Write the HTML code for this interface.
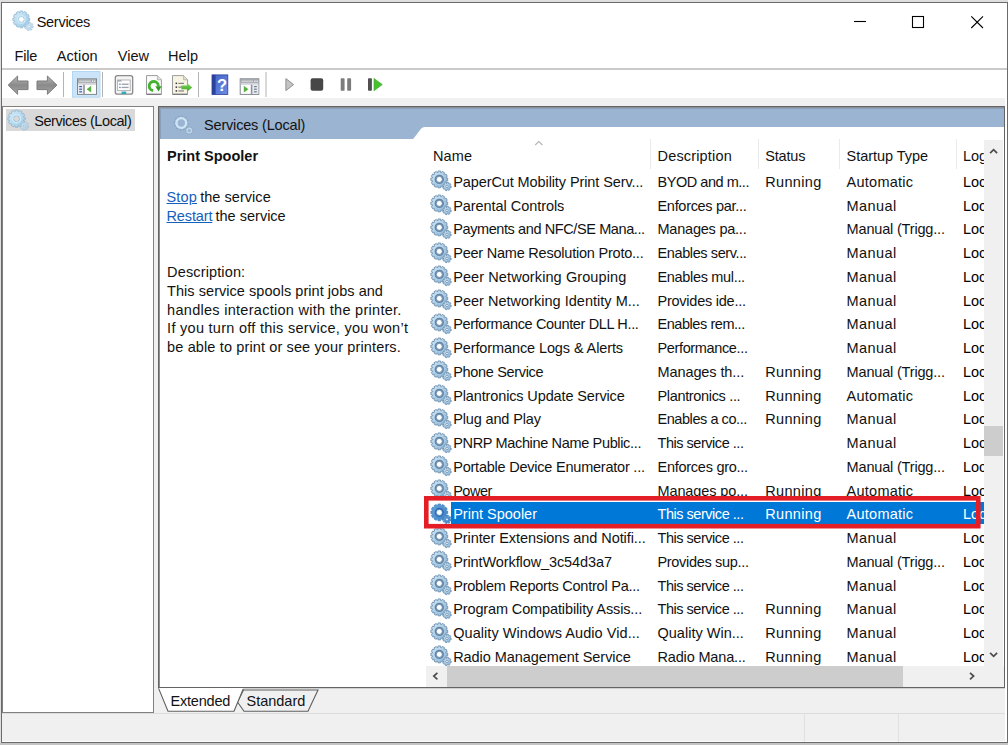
<!DOCTYPE html>
<html lang="en"><head><meta charset="utf-8"><title>Services</title>
<style>html,body{margin:0;padding:0}
body{width:1008px;height:745px;overflow:hidden;background:#dedede;position:relative;font-family:"Liberation Sans",sans-serif;font-size:14.5px;line-height:20px;color:#121212}
.a{position:absolute}
.t{position:absolute;white-space:pre;height:20px}
svg{position:absolute;overflow:visible}
</style></head><body>
<div class="a" style="left:0px;top:743px;width:1008px;height:2px;background:#c4c4c4;"></div>
<div class="a" style="left:1px;top:2px;width:1007px;height:741px;background:#6b6b6b;"></div>
<div class="a" style="left:2px;top:3px;width:1005px;height:739px;background:#fff;"></div>
<div class="a" style="left:2px;top:98px;width:1005px;height:644px;background:#f0f0f0;"></div>
<div class="a" style="left:2px;top:68px;width:1005px;height:2px;background:#cacaca;"></div>
<div class="a" style="left:2px;top:106px;width:152px;height:607px;background:#808080;"></div>
<div class="a" style="left:3px;top:107px;width:150px;height:605px;background:#fff;"></div>
<div class="a" style="left:6px;top:109px;width:128.5px;height:21.6px;background:#d9d9d9;"></div>
<div class="a" style="left:158px;top:106px;width:847px;height:582px;background:#646464;"></div>
<div class="a" style="left:1004px;top:106px;width:3px;height:1px;background:#7a7a7a;"></div>
<div class="a" style="left:159px;top:107px;width:845px;height:580px;background:#8b9097;"></div>
<div class="a" style="left:160px;top:108px;width:844px;height:579px;background:#fff;"></div>
<div class="a" style="left:1005px;top:98px;width:2px;height:644px;background:#fff;"></div>
<div class="a" style="left:2px;top:741px;width:1005px;height:1px;background:#fbfbfb;"></div>
<div class="a" style="left:158px;top:688px;width:847px;height:1px;background:#d0d0d0;"></div>
<div class="a" style="left:160px;top:108px;width:844px;height:31.3px;background:#9ab4d1;"></div>
<div class="a" style="left:160px;top:108px;width:844px;height:1px;background:#8a9fb9;"></div>
<div class="a" style="left:160px;top:108px;width:1px;height:31.3px;background:#8a9fb9;"></div>
<svg style="left:410px;top:124px" width="594" height="18" viewBox="410 124 594 18"><path d="M412 139.4 L413.6 138.6 L421.2 128.6 Q422.5 126.9 424.8 126.9 L1004 126.9 L1004 142 L412 142 Z" fill="#fff"/></svg>
<div class="a" style="left:650px;top:139px;width:1px;height:29.5px;background:#ebebeb;"></div>
<div class="a" style="left:757.5px;top:139px;width:1px;height:29.5px;background:#ebebeb;"></div>
<div class="a" style="left:838.5px;top:139px;width:1px;height:29.5px;background:#ebebeb;"></div>
<div class="a" style="left:955.5px;top:139px;width:1px;height:29.5px;background:#ebebeb;"></div>
<svg style="left:534px;top:140px" width="10" height="6" viewBox="0 0 10 6"><path d="M1.2 5 L4.8 1.6 L8.4 5" fill="none" stroke="#b4b4b4" stroke-width="1.1"/></svg>
<div class="a" style="left:451px;top:502.3px;width:533px;height:22px;background:#0078d7;"></div>
<div class="a" style="left:984px;top:140px;width:19.4px;height:526.4px;background:#f0f0f0;"></div>
<div class="a" style="left:984px;top:425.8px;width:19.4px;height:29.8px;background:#cdcdcd;"></div>
<svg style="left:984px;top:140px" width="20" height="20" viewBox="984 140 20 20"><path d="M990.1 153.2 L993.6 149.6 L997.1 153.2" fill="none" stroke="#4c4c4c" stroke-width="1.7"/></svg>
<svg style="left:984px;top:645px" width="20" height="20" viewBox="984 645 20 20"><path d="M990.1 652.8 L993.6 656.4 L997.1 652.8" fill="none" stroke="#4c4c4c" stroke-width="1.7"/></svg>
<div class="a" style="left:426px;top:666.4px;width:578px;height:20.6px;background:#f0f0f0;"></div>
<div class="a" style="left:447px;top:666.4px;width:456.3px;height:20.6px;background:#cdcdcd;"></div>
<svg style="left:427px;top:666px" width="20" height="21" viewBox="427 666 20 21"><path d="M437.4 672.9 L433.8 676.1 L437.4 679.3" fill="none" stroke="#4c4c4c" stroke-width="1.7"/></svg>
<svg style="left:962px;top:666px" width="20" height="21" viewBox="962 666 20 21"><path d="M970 672.9 L973.6 676.1 L970 679.3" fill="none" stroke="#4c4c4c" stroke-width="1.7"/></svg>
<svg style="left:150px;top:686px" width="180" height="28" viewBox="0 0 180 28"><path d="M87.5 16 L93.5 4 L168 4 L158 25.3 L94 25.3 Z" fill="#f0f0f0" stroke="#5f5f5f" stroke-width="1.1"/><path d="M8.6 2 L18 25.3 L84 25.3 L93.2 3 L93.2 2 Z" fill="#fff"/><path d="M8.6 2.4 L18 25.3 L84 25.3 L93.2 3" fill="none" stroke="#5f5f5f" stroke-width="1.1"/></svg>
<div class="a" style="left:2px;top:713px;width:1003px;height:1px;background:#dcdcdc;"></div>
<div class="a" style="left:803.5px;top:714px;width:1px;height:28px;background:#e1e1e1;"></div>
<div class="a" style="left:897.5px;top:714px;width:1px;height:28px;background:#e1e1e1;"></div>
<svg style="left:850px;top:10px" width="140" height="24" viewBox="0 0 140 24"><path d="M4 11.5 H16" stroke="#000" stroke-width="1.1"/><rect x="62.5" y="6.5" width="11" height="11" fill="none" stroke="#000" stroke-width="1.1"/><path d="M121.3 6.3 L133 18 M133 6.3 L121.3 18" stroke="#000" stroke-width="1.1"/></svg>
<svg width="0" height="0" style="left:0;top:0"><defs><linearGradient id="gg" x1="0" y1="0" x2="1" y2="1"><stop offset="0" stop-color="#d6eaf6"/><stop offset="0.55" stop-color="#aacde8"/><stop offset="1" stop-color="#86b0d3"/></linearGradient><linearGradient id="gp" x1="0" y1="0" x2="1" y2="1"><stop offset="0" stop-color="#d3ebf8"/><stop offset="0.6" stop-color="#b3d8ee"/><stop offset="1" stop-color="#9cc4e0"/></linearGradient><linearGradient id="gs" x1="0" y1="0" x2="1" y2="1"><stop offset="0" stop-color="#6aa3d8"/><stop offset="1" stop-color="#3b7fc4"/></linearGradient></defs></svg>
<svg style="left:11.5px;top:10.1px" width="22" height="22" viewBox="0 0 22 22"><path d="M16.16 8.02 L17.70 8.07 L17.70 10.73 L16.16 10.78 L15.93 11.63 L17.24 12.45 L15.91 14.75 L14.55 14.03 L13.93 14.65 L14.65 16.01 L12.35 17.34 L11.53 16.03 L10.68 16.26 L10.63 17.80 L7.97 17.80 L7.92 16.26 L7.07 16.03 L6.25 17.34 L3.95 16.01 L4.67 14.65 L4.05 14.03 L2.69 14.75 L1.36 12.45 L2.67 11.63 L2.44 10.78 L0.90 10.73 L0.90 8.07 L2.44 8.02 L2.67 7.17 L1.36 6.35 L2.69 4.05 L4.05 4.77 L4.67 4.15 L3.95 2.79 L6.25 1.46 L7.07 2.77 L7.92 2.54 L7.97 1.00 L10.63 1.00 L10.68 2.54 L11.53 2.77 L12.35 1.46 L14.65 2.79 L13.93 4.15 L14.55 4.77 L15.91 4.05 L17.24 6.35 L15.93 7.17 Z M6.30 9.40 a3.00 3.00 0 1 0 6.00 0 a3.00 3.00 0 1 0 -6.00 0 Z" fill="url(#gp)" fill-rule="evenodd" stroke="#93b6d0" stroke-width="0.8"/><circle cx="9.3" cy="9.4" r="3.9" fill="none" stroke="#c9e8f8" stroke-width="1.6"/><path d="M20.09 16.22 L21.30 16.42 L20.97 18.06 L19.78 17.77 L19.32 18.46 L20.03 19.45 L18.63 20.38 L17.99 19.34 L17.18 19.49 L16.98 20.70 L15.34 20.37 L15.63 19.18 L14.94 18.72 L13.95 19.43 L13.02 18.03 L14.06 17.39 L13.91 16.58 L12.70 16.38 L13.03 14.74 L14.22 15.03 L14.68 14.34 L13.97 13.35 L15.37 12.42 L16.01 13.46 L16.82 13.31 L17.02 12.10 L18.66 12.43 L18.37 13.62 L19.06 14.08 L20.05 13.37 L20.98 14.77 L19.94 15.41 Z M15.80 16.40 a1.20 1.20 0 1 0 2.40 0 a1.20 1.20 0 1 0 -2.40 0 Z" fill="url(#gp)" fill-rule="evenodd" stroke="#9dbdd6" stroke-width="0.7" opacity="0.8"/></svg>
<svg style="left:7.421px;top:108.718px" width="22.66" height="22.66" viewBox="0 0 22 22"><path d="M16.16 8.02 L17.70 8.07 L17.70 10.73 L16.16 10.78 L15.93 11.63 L17.24 12.45 L15.91 14.75 L14.55 14.03 L13.93 14.65 L14.65 16.01 L12.35 17.34 L11.53 16.03 L10.68 16.26 L10.63 17.80 L7.97 17.80 L7.92 16.26 L7.07 16.03 L6.25 17.34 L3.95 16.01 L4.67 14.65 L4.05 14.03 L2.69 14.75 L1.36 12.45 L2.67 11.63 L2.44 10.78 L0.90 10.73 L0.90 8.07 L2.44 8.02 L2.67 7.17 L1.36 6.35 L2.69 4.05 L4.05 4.77 L4.67 4.15 L3.95 2.79 L6.25 1.46 L7.07 2.77 L7.92 2.54 L7.97 1.00 L10.63 1.00 L10.68 2.54 L11.53 2.77 L12.35 1.46 L14.65 2.79 L13.93 4.15 L14.55 4.77 L15.91 4.05 L17.24 6.35 L15.93 7.17 Z M6.30 9.40 a3.00 3.00 0 1 0 6.00 0 a3.00 3.00 0 1 0 -6.00 0 Z" fill="url(#gp)" fill-rule="evenodd" stroke="#93b6d0" stroke-width="0.8"/><circle cx="9.3" cy="9.4" r="3.9" fill="none" stroke="#c9e8f8" stroke-width="1.6"/><path d="M20.09 16.22 L21.30 16.42 L20.97 18.06 L19.78 17.77 L19.32 18.46 L20.03 19.45 L18.63 20.38 L17.99 19.34 L17.18 19.49 L16.98 20.70 L15.34 20.37 L15.63 19.18 L14.94 18.72 L13.95 19.43 L13.02 18.03 L14.06 17.39 L13.91 16.58 L12.70 16.38 L13.03 14.74 L14.22 15.03 L14.68 14.34 L13.97 13.35 L15.37 12.42 L16.01 13.46 L16.82 13.31 L17.02 12.10 L18.66 12.43 L18.37 13.62 L19.06 14.08 L20.05 13.37 L20.98 14.77 L19.94 15.41 Z M15.80 16.40 a1.20 1.20 0 1 0 2.40 0 a1.20 1.20 0 1 0 -2.40 0 Z" fill="url(#gp)" fill-rule="evenodd" stroke="#9dbdd6" stroke-width="0.7" opacity="0.8"/></svg>
<svg style="left:430px;top:170.3px" width="22" height="22" viewBox="0 0 22 22"><path d="M16.16 8.02 L17.70 8.07 L17.70 10.73 L16.16 10.78 L15.93 11.63 L17.24 12.45 L15.91 14.75 L14.55 14.03 L13.93 14.65 L14.65 16.01 L12.35 17.34 L11.53 16.03 L10.68 16.26 L10.63 17.80 L7.97 17.80 L7.92 16.26 L7.07 16.03 L6.25 17.34 L3.95 16.01 L4.67 14.65 L4.05 14.03 L2.69 14.75 L1.36 12.45 L2.67 11.63 L2.44 10.78 L0.90 10.73 L0.90 8.07 L2.44 8.02 L2.67 7.17 L1.36 6.35 L2.69 4.05 L4.05 4.77 L4.67 4.15 L3.95 2.79 L6.25 1.46 L7.07 2.77 L7.92 2.54 L7.97 1.00 L10.63 1.00 L10.68 2.54 L11.53 2.77 L12.35 1.46 L14.65 2.79 L13.93 4.15 L14.55 4.77 L15.91 4.05 L17.24 6.35 L15.93 7.17 Z M6.30 9.40 a3.00 3.00 0 1 0 6.00 0 a3.00 3.00 0 1 0 -6.00 0 Z" fill="url(#gg)" fill-rule="evenodd" stroke="#7797b4" stroke-width="1"/><circle cx="9.3" cy="9.4" r="3.9" fill="none" stroke="#6283a3" stroke-width="1.5"/><path d="M20.09 16.22 L21.30 16.42 L20.97 18.06 L19.78 17.77 L19.32 18.46 L20.03 19.45 L18.63 20.38 L17.99 19.34 L17.18 19.49 L16.98 20.70 L15.34 20.37 L15.63 19.18 L14.94 18.72 L13.95 19.43 L13.02 18.03 L14.06 17.39 L13.91 16.58 L12.70 16.38 L13.03 14.74 L14.22 15.03 L14.68 14.34 L13.97 13.35 L15.37 12.42 L16.01 13.46 L16.82 13.31 L17.02 12.10 L18.66 12.43 L18.37 13.62 L19.06 14.08 L20.05 13.37 L20.98 14.77 L19.94 15.41 Z M15.80 16.40 a1.20 1.20 0 1 0 2.40 0 a1.20 1.20 0 1 0 -2.40 0 Z" fill="url(#gg)" fill-rule="evenodd" stroke="#7595b3" stroke-width="0.9"/></svg>
<svg style="left:430px;top:194.05px" width="22" height="22" viewBox="0 0 22 22"><path d="M16.16 8.02 L17.70 8.07 L17.70 10.73 L16.16 10.78 L15.93 11.63 L17.24 12.45 L15.91 14.75 L14.55 14.03 L13.93 14.65 L14.65 16.01 L12.35 17.34 L11.53 16.03 L10.68 16.26 L10.63 17.80 L7.97 17.80 L7.92 16.26 L7.07 16.03 L6.25 17.34 L3.95 16.01 L4.67 14.65 L4.05 14.03 L2.69 14.75 L1.36 12.45 L2.67 11.63 L2.44 10.78 L0.90 10.73 L0.90 8.07 L2.44 8.02 L2.67 7.17 L1.36 6.35 L2.69 4.05 L4.05 4.77 L4.67 4.15 L3.95 2.79 L6.25 1.46 L7.07 2.77 L7.92 2.54 L7.97 1.00 L10.63 1.00 L10.68 2.54 L11.53 2.77 L12.35 1.46 L14.65 2.79 L13.93 4.15 L14.55 4.77 L15.91 4.05 L17.24 6.35 L15.93 7.17 Z M6.30 9.40 a3.00 3.00 0 1 0 6.00 0 a3.00 3.00 0 1 0 -6.00 0 Z" fill="url(#gg)" fill-rule="evenodd" stroke="#7797b4" stroke-width="1"/><circle cx="9.3" cy="9.4" r="3.9" fill="none" stroke="#6283a3" stroke-width="1.5"/><path d="M20.09 16.22 L21.30 16.42 L20.97 18.06 L19.78 17.77 L19.32 18.46 L20.03 19.45 L18.63 20.38 L17.99 19.34 L17.18 19.49 L16.98 20.70 L15.34 20.37 L15.63 19.18 L14.94 18.72 L13.95 19.43 L13.02 18.03 L14.06 17.39 L13.91 16.58 L12.70 16.38 L13.03 14.74 L14.22 15.03 L14.68 14.34 L13.97 13.35 L15.37 12.42 L16.01 13.46 L16.82 13.31 L17.02 12.10 L18.66 12.43 L18.37 13.62 L19.06 14.08 L20.05 13.37 L20.98 14.77 L19.94 15.41 Z M15.80 16.40 a1.20 1.20 0 1 0 2.40 0 a1.20 1.20 0 1 0 -2.40 0 Z" fill="url(#gg)" fill-rule="evenodd" stroke="#7595b3" stroke-width="0.9"/></svg>
<svg style="left:430px;top:217.8px" width="22" height="22" viewBox="0 0 22 22"><path d="M16.16 8.02 L17.70 8.07 L17.70 10.73 L16.16 10.78 L15.93 11.63 L17.24 12.45 L15.91 14.75 L14.55 14.03 L13.93 14.65 L14.65 16.01 L12.35 17.34 L11.53 16.03 L10.68 16.26 L10.63 17.80 L7.97 17.80 L7.92 16.26 L7.07 16.03 L6.25 17.34 L3.95 16.01 L4.67 14.65 L4.05 14.03 L2.69 14.75 L1.36 12.45 L2.67 11.63 L2.44 10.78 L0.90 10.73 L0.90 8.07 L2.44 8.02 L2.67 7.17 L1.36 6.35 L2.69 4.05 L4.05 4.77 L4.67 4.15 L3.95 2.79 L6.25 1.46 L7.07 2.77 L7.92 2.54 L7.97 1.00 L10.63 1.00 L10.68 2.54 L11.53 2.77 L12.35 1.46 L14.65 2.79 L13.93 4.15 L14.55 4.77 L15.91 4.05 L17.24 6.35 L15.93 7.17 Z M6.30 9.40 a3.00 3.00 0 1 0 6.00 0 a3.00 3.00 0 1 0 -6.00 0 Z" fill="url(#gg)" fill-rule="evenodd" stroke="#7797b4" stroke-width="1"/><circle cx="9.3" cy="9.4" r="3.9" fill="none" stroke="#6283a3" stroke-width="1.5"/><path d="M20.09 16.22 L21.30 16.42 L20.97 18.06 L19.78 17.77 L19.32 18.46 L20.03 19.45 L18.63 20.38 L17.99 19.34 L17.18 19.49 L16.98 20.70 L15.34 20.37 L15.63 19.18 L14.94 18.72 L13.95 19.43 L13.02 18.03 L14.06 17.39 L13.91 16.58 L12.70 16.38 L13.03 14.74 L14.22 15.03 L14.68 14.34 L13.97 13.35 L15.37 12.42 L16.01 13.46 L16.82 13.31 L17.02 12.10 L18.66 12.43 L18.37 13.62 L19.06 14.08 L20.05 13.37 L20.98 14.77 L19.94 15.41 Z M15.80 16.40 a1.20 1.20 0 1 0 2.40 0 a1.20 1.20 0 1 0 -2.40 0 Z" fill="url(#gg)" fill-rule="evenodd" stroke="#7595b3" stroke-width="0.9"/></svg>
<svg style="left:430px;top:241.55px" width="22" height="22" viewBox="0 0 22 22"><path d="M16.16 8.02 L17.70 8.07 L17.70 10.73 L16.16 10.78 L15.93 11.63 L17.24 12.45 L15.91 14.75 L14.55 14.03 L13.93 14.65 L14.65 16.01 L12.35 17.34 L11.53 16.03 L10.68 16.26 L10.63 17.80 L7.97 17.80 L7.92 16.26 L7.07 16.03 L6.25 17.34 L3.95 16.01 L4.67 14.65 L4.05 14.03 L2.69 14.75 L1.36 12.45 L2.67 11.63 L2.44 10.78 L0.90 10.73 L0.90 8.07 L2.44 8.02 L2.67 7.17 L1.36 6.35 L2.69 4.05 L4.05 4.77 L4.67 4.15 L3.95 2.79 L6.25 1.46 L7.07 2.77 L7.92 2.54 L7.97 1.00 L10.63 1.00 L10.68 2.54 L11.53 2.77 L12.35 1.46 L14.65 2.79 L13.93 4.15 L14.55 4.77 L15.91 4.05 L17.24 6.35 L15.93 7.17 Z M6.30 9.40 a3.00 3.00 0 1 0 6.00 0 a3.00 3.00 0 1 0 -6.00 0 Z" fill="url(#gg)" fill-rule="evenodd" stroke="#7797b4" stroke-width="1"/><circle cx="9.3" cy="9.4" r="3.9" fill="none" stroke="#6283a3" stroke-width="1.5"/><path d="M20.09 16.22 L21.30 16.42 L20.97 18.06 L19.78 17.77 L19.32 18.46 L20.03 19.45 L18.63 20.38 L17.99 19.34 L17.18 19.49 L16.98 20.70 L15.34 20.37 L15.63 19.18 L14.94 18.72 L13.95 19.43 L13.02 18.03 L14.06 17.39 L13.91 16.58 L12.70 16.38 L13.03 14.74 L14.22 15.03 L14.68 14.34 L13.97 13.35 L15.37 12.42 L16.01 13.46 L16.82 13.31 L17.02 12.10 L18.66 12.43 L18.37 13.62 L19.06 14.08 L20.05 13.37 L20.98 14.77 L19.94 15.41 Z M15.80 16.40 a1.20 1.20 0 1 0 2.40 0 a1.20 1.20 0 1 0 -2.40 0 Z" fill="url(#gg)" fill-rule="evenodd" stroke="#7595b3" stroke-width="0.9"/></svg>
<svg style="left:430px;top:265.3px" width="22" height="22" viewBox="0 0 22 22"><path d="M16.16 8.02 L17.70 8.07 L17.70 10.73 L16.16 10.78 L15.93 11.63 L17.24 12.45 L15.91 14.75 L14.55 14.03 L13.93 14.65 L14.65 16.01 L12.35 17.34 L11.53 16.03 L10.68 16.26 L10.63 17.80 L7.97 17.80 L7.92 16.26 L7.07 16.03 L6.25 17.34 L3.95 16.01 L4.67 14.65 L4.05 14.03 L2.69 14.75 L1.36 12.45 L2.67 11.63 L2.44 10.78 L0.90 10.73 L0.90 8.07 L2.44 8.02 L2.67 7.17 L1.36 6.35 L2.69 4.05 L4.05 4.77 L4.67 4.15 L3.95 2.79 L6.25 1.46 L7.07 2.77 L7.92 2.54 L7.97 1.00 L10.63 1.00 L10.68 2.54 L11.53 2.77 L12.35 1.46 L14.65 2.79 L13.93 4.15 L14.55 4.77 L15.91 4.05 L17.24 6.35 L15.93 7.17 Z M6.30 9.40 a3.00 3.00 0 1 0 6.00 0 a3.00 3.00 0 1 0 -6.00 0 Z" fill="url(#gg)" fill-rule="evenodd" stroke="#7797b4" stroke-width="1"/><circle cx="9.3" cy="9.4" r="3.9" fill="none" stroke="#6283a3" stroke-width="1.5"/><path d="M20.09 16.22 L21.30 16.42 L20.97 18.06 L19.78 17.77 L19.32 18.46 L20.03 19.45 L18.63 20.38 L17.99 19.34 L17.18 19.49 L16.98 20.70 L15.34 20.37 L15.63 19.18 L14.94 18.72 L13.95 19.43 L13.02 18.03 L14.06 17.39 L13.91 16.58 L12.70 16.38 L13.03 14.74 L14.22 15.03 L14.68 14.34 L13.97 13.35 L15.37 12.42 L16.01 13.46 L16.82 13.31 L17.02 12.10 L18.66 12.43 L18.37 13.62 L19.06 14.08 L20.05 13.37 L20.98 14.77 L19.94 15.41 Z M15.80 16.40 a1.20 1.20 0 1 0 2.40 0 a1.20 1.20 0 1 0 -2.40 0 Z" fill="url(#gg)" fill-rule="evenodd" stroke="#7595b3" stroke-width="0.9"/></svg>
<svg style="left:430px;top:289.05px" width="22" height="22" viewBox="0 0 22 22"><path d="M16.16 8.02 L17.70 8.07 L17.70 10.73 L16.16 10.78 L15.93 11.63 L17.24 12.45 L15.91 14.75 L14.55 14.03 L13.93 14.65 L14.65 16.01 L12.35 17.34 L11.53 16.03 L10.68 16.26 L10.63 17.80 L7.97 17.80 L7.92 16.26 L7.07 16.03 L6.25 17.34 L3.95 16.01 L4.67 14.65 L4.05 14.03 L2.69 14.75 L1.36 12.45 L2.67 11.63 L2.44 10.78 L0.90 10.73 L0.90 8.07 L2.44 8.02 L2.67 7.17 L1.36 6.35 L2.69 4.05 L4.05 4.77 L4.67 4.15 L3.95 2.79 L6.25 1.46 L7.07 2.77 L7.92 2.54 L7.97 1.00 L10.63 1.00 L10.68 2.54 L11.53 2.77 L12.35 1.46 L14.65 2.79 L13.93 4.15 L14.55 4.77 L15.91 4.05 L17.24 6.35 L15.93 7.17 Z M6.30 9.40 a3.00 3.00 0 1 0 6.00 0 a3.00 3.00 0 1 0 -6.00 0 Z" fill="url(#gg)" fill-rule="evenodd" stroke="#7797b4" stroke-width="1"/><circle cx="9.3" cy="9.4" r="3.9" fill="none" stroke="#6283a3" stroke-width="1.5"/><path d="M20.09 16.22 L21.30 16.42 L20.97 18.06 L19.78 17.77 L19.32 18.46 L20.03 19.45 L18.63 20.38 L17.99 19.34 L17.18 19.49 L16.98 20.70 L15.34 20.37 L15.63 19.18 L14.94 18.72 L13.95 19.43 L13.02 18.03 L14.06 17.39 L13.91 16.58 L12.70 16.38 L13.03 14.74 L14.22 15.03 L14.68 14.34 L13.97 13.35 L15.37 12.42 L16.01 13.46 L16.82 13.31 L17.02 12.10 L18.66 12.43 L18.37 13.62 L19.06 14.08 L20.05 13.37 L20.98 14.77 L19.94 15.41 Z M15.80 16.40 a1.20 1.20 0 1 0 2.40 0 a1.20 1.20 0 1 0 -2.40 0 Z" fill="url(#gg)" fill-rule="evenodd" stroke="#7595b3" stroke-width="0.9"/></svg>
<svg style="left:430px;top:312.8px" width="22" height="22" viewBox="0 0 22 22"><path d="M16.16 8.02 L17.70 8.07 L17.70 10.73 L16.16 10.78 L15.93 11.63 L17.24 12.45 L15.91 14.75 L14.55 14.03 L13.93 14.65 L14.65 16.01 L12.35 17.34 L11.53 16.03 L10.68 16.26 L10.63 17.80 L7.97 17.80 L7.92 16.26 L7.07 16.03 L6.25 17.34 L3.95 16.01 L4.67 14.65 L4.05 14.03 L2.69 14.75 L1.36 12.45 L2.67 11.63 L2.44 10.78 L0.90 10.73 L0.90 8.07 L2.44 8.02 L2.67 7.17 L1.36 6.35 L2.69 4.05 L4.05 4.77 L4.67 4.15 L3.95 2.79 L6.25 1.46 L7.07 2.77 L7.92 2.54 L7.97 1.00 L10.63 1.00 L10.68 2.54 L11.53 2.77 L12.35 1.46 L14.65 2.79 L13.93 4.15 L14.55 4.77 L15.91 4.05 L17.24 6.35 L15.93 7.17 Z M6.30 9.40 a3.00 3.00 0 1 0 6.00 0 a3.00 3.00 0 1 0 -6.00 0 Z" fill="url(#gg)" fill-rule="evenodd" stroke="#7797b4" stroke-width="1"/><circle cx="9.3" cy="9.4" r="3.9" fill="none" stroke="#6283a3" stroke-width="1.5"/><path d="M20.09 16.22 L21.30 16.42 L20.97 18.06 L19.78 17.77 L19.32 18.46 L20.03 19.45 L18.63 20.38 L17.99 19.34 L17.18 19.49 L16.98 20.70 L15.34 20.37 L15.63 19.18 L14.94 18.72 L13.95 19.43 L13.02 18.03 L14.06 17.39 L13.91 16.58 L12.70 16.38 L13.03 14.74 L14.22 15.03 L14.68 14.34 L13.97 13.35 L15.37 12.42 L16.01 13.46 L16.82 13.31 L17.02 12.10 L18.66 12.43 L18.37 13.62 L19.06 14.08 L20.05 13.37 L20.98 14.77 L19.94 15.41 Z M15.80 16.40 a1.20 1.20 0 1 0 2.40 0 a1.20 1.20 0 1 0 -2.40 0 Z" fill="url(#gg)" fill-rule="evenodd" stroke="#7595b3" stroke-width="0.9"/></svg>
<svg style="left:430px;top:336.55px" width="22" height="22" viewBox="0 0 22 22"><path d="M16.16 8.02 L17.70 8.07 L17.70 10.73 L16.16 10.78 L15.93 11.63 L17.24 12.45 L15.91 14.75 L14.55 14.03 L13.93 14.65 L14.65 16.01 L12.35 17.34 L11.53 16.03 L10.68 16.26 L10.63 17.80 L7.97 17.80 L7.92 16.26 L7.07 16.03 L6.25 17.34 L3.95 16.01 L4.67 14.65 L4.05 14.03 L2.69 14.75 L1.36 12.45 L2.67 11.63 L2.44 10.78 L0.90 10.73 L0.90 8.07 L2.44 8.02 L2.67 7.17 L1.36 6.35 L2.69 4.05 L4.05 4.77 L4.67 4.15 L3.95 2.79 L6.25 1.46 L7.07 2.77 L7.92 2.54 L7.97 1.00 L10.63 1.00 L10.68 2.54 L11.53 2.77 L12.35 1.46 L14.65 2.79 L13.93 4.15 L14.55 4.77 L15.91 4.05 L17.24 6.35 L15.93 7.17 Z M6.30 9.40 a3.00 3.00 0 1 0 6.00 0 a3.00 3.00 0 1 0 -6.00 0 Z" fill="url(#gg)" fill-rule="evenodd" stroke="#7797b4" stroke-width="1"/><circle cx="9.3" cy="9.4" r="3.9" fill="none" stroke="#6283a3" stroke-width="1.5"/><path d="M20.09 16.22 L21.30 16.42 L20.97 18.06 L19.78 17.77 L19.32 18.46 L20.03 19.45 L18.63 20.38 L17.99 19.34 L17.18 19.49 L16.98 20.70 L15.34 20.37 L15.63 19.18 L14.94 18.72 L13.95 19.43 L13.02 18.03 L14.06 17.39 L13.91 16.58 L12.70 16.38 L13.03 14.74 L14.22 15.03 L14.68 14.34 L13.97 13.35 L15.37 12.42 L16.01 13.46 L16.82 13.31 L17.02 12.10 L18.66 12.43 L18.37 13.62 L19.06 14.08 L20.05 13.37 L20.98 14.77 L19.94 15.41 Z M15.80 16.40 a1.20 1.20 0 1 0 2.40 0 a1.20 1.20 0 1 0 -2.40 0 Z" fill="url(#gg)" fill-rule="evenodd" stroke="#7595b3" stroke-width="0.9"/></svg>
<svg style="left:430px;top:360.3px" width="22" height="22" viewBox="0 0 22 22"><path d="M16.16 8.02 L17.70 8.07 L17.70 10.73 L16.16 10.78 L15.93 11.63 L17.24 12.45 L15.91 14.75 L14.55 14.03 L13.93 14.65 L14.65 16.01 L12.35 17.34 L11.53 16.03 L10.68 16.26 L10.63 17.80 L7.97 17.80 L7.92 16.26 L7.07 16.03 L6.25 17.34 L3.95 16.01 L4.67 14.65 L4.05 14.03 L2.69 14.75 L1.36 12.45 L2.67 11.63 L2.44 10.78 L0.90 10.73 L0.90 8.07 L2.44 8.02 L2.67 7.17 L1.36 6.35 L2.69 4.05 L4.05 4.77 L4.67 4.15 L3.95 2.79 L6.25 1.46 L7.07 2.77 L7.92 2.54 L7.97 1.00 L10.63 1.00 L10.68 2.54 L11.53 2.77 L12.35 1.46 L14.65 2.79 L13.93 4.15 L14.55 4.77 L15.91 4.05 L17.24 6.35 L15.93 7.17 Z M6.30 9.40 a3.00 3.00 0 1 0 6.00 0 a3.00 3.00 0 1 0 -6.00 0 Z" fill="url(#gg)" fill-rule="evenodd" stroke="#7797b4" stroke-width="1"/><circle cx="9.3" cy="9.4" r="3.9" fill="none" stroke="#6283a3" stroke-width="1.5"/><path d="M20.09 16.22 L21.30 16.42 L20.97 18.06 L19.78 17.77 L19.32 18.46 L20.03 19.45 L18.63 20.38 L17.99 19.34 L17.18 19.49 L16.98 20.70 L15.34 20.37 L15.63 19.18 L14.94 18.72 L13.95 19.43 L13.02 18.03 L14.06 17.39 L13.91 16.58 L12.70 16.38 L13.03 14.74 L14.22 15.03 L14.68 14.34 L13.97 13.35 L15.37 12.42 L16.01 13.46 L16.82 13.31 L17.02 12.10 L18.66 12.43 L18.37 13.62 L19.06 14.08 L20.05 13.37 L20.98 14.77 L19.94 15.41 Z M15.80 16.40 a1.20 1.20 0 1 0 2.40 0 a1.20 1.20 0 1 0 -2.40 0 Z" fill="url(#gg)" fill-rule="evenodd" stroke="#7595b3" stroke-width="0.9"/></svg>
<svg style="left:430px;top:384.05px" width="22" height="22" viewBox="0 0 22 22"><path d="M16.16 8.02 L17.70 8.07 L17.70 10.73 L16.16 10.78 L15.93 11.63 L17.24 12.45 L15.91 14.75 L14.55 14.03 L13.93 14.65 L14.65 16.01 L12.35 17.34 L11.53 16.03 L10.68 16.26 L10.63 17.80 L7.97 17.80 L7.92 16.26 L7.07 16.03 L6.25 17.34 L3.95 16.01 L4.67 14.65 L4.05 14.03 L2.69 14.75 L1.36 12.45 L2.67 11.63 L2.44 10.78 L0.90 10.73 L0.90 8.07 L2.44 8.02 L2.67 7.17 L1.36 6.35 L2.69 4.05 L4.05 4.77 L4.67 4.15 L3.95 2.79 L6.25 1.46 L7.07 2.77 L7.92 2.54 L7.97 1.00 L10.63 1.00 L10.68 2.54 L11.53 2.77 L12.35 1.46 L14.65 2.79 L13.93 4.15 L14.55 4.77 L15.91 4.05 L17.24 6.35 L15.93 7.17 Z M6.30 9.40 a3.00 3.00 0 1 0 6.00 0 a3.00 3.00 0 1 0 -6.00 0 Z" fill="url(#gg)" fill-rule="evenodd" stroke="#7797b4" stroke-width="1"/><circle cx="9.3" cy="9.4" r="3.9" fill="none" stroke="#6283a3" stroke-width="1.5"/><path d="M20.09 16.22 L21.30 16.42 L20.97 18.06 L19.78 17.77 L19.32 18.46 L20.03 19.45 L18.63 20.38 L17.99 19.34 L17.18 19.49 L16.98 20.70 L15.34 20.37 L15.63 19.18 L14.94 18.72 L13.95 19.43 L13.02 18.03 L14.06 17.39 L13.91 16.58 L12.70 16.38 L13.03 14.74 L14.22 15.03 L14.68 14.34 L13.97 13.35 L15.37 12.42 L16.01 13.46 L16.82 13.31 L17.02 12.10 L18.66 12.43 L18.37 13.62 L19.06 14.08 L20.05 13.37 L20.98 14.77 L19.94 15.41 Z M15.80 16.40 a1.20 1.20 0 1 0 2.40 0 a1.20 1.20 0 1 0 -2.40 0 Z" fill="url(#gg)" fill-rule="evenodd" stroke="#7595b3" stroke-width="0.9"/></svg>
<svg style="left:430px;top:407.8px" width="22" height="22" viewBox="0 0 22 22"><path d="M16.16 8.02 L17.70 8.07 L17.70 10.73 L16.16 10.78 L15.93 11.63 L17.24 12.45 L15.91 14.75 L14.55 14.03 L13.93 14.65 L14.65 16.01 L12.35 17.34 L11.53 16.03 L10.68 16.26 L10.63 17.80 L7.97 17.80 L7.92 16.26 L7.07 16.03 L6.25 17.34 L3.95 16.01 L4.67 14.65 L4.05 14.03 L2.69 14.75 L1.36 12.45 L2.67 11.63 L2.44 10.78 L0.90 10.73 L0.90 8.07 L2.44 8.02 L2.67 7.17 L1.36 6.35 L2.69 4.05 L4.05 4.77 L4.67 4.15 L3.95 2.79 L6.25 1.46 L7.07 2.77 L7.92 2.54 L7.97 1.00 L10.63 1.00 L10.68 2.54 L11.53 2.77 L12.35 1.46 L14.65 2.79 L13.93 4.15 L14.55 4.77 L15.91 4.05 L17.24 6.35 L15.93 7.17 Z M6.30 9.40 a3.00 3.00 0 1 0 6.00 0 a3.00 3.00 0 1 0 -6.00 0 Z" fill="url(#gg)" fill-rule="evenodd" stroke="#7797b4" stroke-width="1"/><circle cx="9.3" cy="9.4" r="3.9" fill="none" stroke="#6283a3" stroke-width="1.5"/><path d="M20.09 16.22 L21.30 16.42 L20.97 18.06 L19.78 17.77 L19.32 18.46 L20.03 19.45 L18.63 20.38 L17.99 19.34 L17.18 19.49 L16.98 20.70 L15.34 20.37 L15.63 19.18 L14.94 18.72 L13.95 19.43 L13.02 18.03 L14.06 17.39 L13.91 16.58 L12.70 16.38 L13.03 14.74 L14.22 15.03 L14.68 14.34 L13.97 13.35 L15.37 12.42 L16.01 13.46 L16.82 13.31 L17.02 12.10 L18.66 12.43 L18.37 13.62 L19.06 14.08 L20.05 13.37 L20.98 14.77 L19.94 15.41 Z M15.80 16.40 a1.20 1.20 0 1 0 2.40 0 a1.20 1.20 0 1 0 -2.40 0 Z" fill="url(#gg)" fill-rule="evenodd" stroke="#7595b3" stroke-width="0.9"/></svg>
<svg style="left:430px;top:431.55px" width="22" height="22" viewBox="0 0 22 22"><path d="M16.16 8.02 L17.70 8.07 L17.70 10.73 L16.16 10.78 L15.93 11.63 L17.24 12.45 L15.91 14.75 L14.55 14.03 L13.93 14.65 L14.65 16.01 L12.35 17.34 L11.53 16.03 L10.68 16.26 L10.63 17.80 L7.97 17.80 L7.92 16.26 L7.07 16.03 L6.25 17.34 L3.95 16.01 L4.67 14.65 L4.05 14.03 L2.69 14.75 L1.36 12.45 L2.67 11.63 L2.44 10.78 L0.90 10.73 L0.90 8.07 L2.44 8.02 L2.67 7.17 L1.36 6.35 L2.69 4.05 L4.05 4.77 L4.67 4.15 L3.95 2.79 L6.25 1.46 L7.07 2.77 L7.92 2.54 L7.97 1.00 L10.63 1.00 L10.68 2.54 L11.53 2.77 L12.35 1.46 L14.65 2.79 L13.93 4.15 L14.55 4.77 L15.91 4.05 L17.24 6.35 L15.93 7.17 Z M6.30 9.40 a3.00 3.00 0 1 0 6.00 0 a3.00 3.00 0 1 0 -6.00 0 Z" fill="url(#gg)" fill-rule="evenodd" stroke="#7797b4" stroke-width="1"/><circle cx="9.3" cy="9.4" r="3.9" fill="none" stroke="#6283a3" stroke-width="1.5"/><path d="M20.09 16.22 L21.30 16.42 L20.97 18.06 L19.78 17.77 L19.32 18.46 L20.03 19.45 L18.63 20.38 L17.99 19.34 L17.18 19.49 L16.98 20.70 L15.34 20.37 L15.63 19.18 L14.94 18.72 L13.95 19.43 L13.02 18.03 L14.06 17.39 L13.91 16.58 L12.70 16.38 L13.03 14.74 L14.22 15.03 L14.68 14.34 L13.97 13.35 L15.37 12.42 L16.01 13.46 L16.82 13.31 L17.02 12.10 L18.66 12.43 L18.37 13.62 L19.06 14.08 L20.05 13.37 L20.98 14.77 L19.94 15.41 Z M15.80 16.40 a1.20 1.20 0 1 0 2.40 0 a1.20 1.20 0 1 0 -2.40 0 Z" fill="url(#gg)" fill-rule="evenodd" stroke="#7595b3" stroke-width="0.9"/></svg>
<svg style="left:430px;top:455.3px" width="22" height="22" viewBox="0 0 22 22"><path d="M16.16 8.02 L17.70 8.07 L17.70 10.73 L16.16 10.78 L15.93 11.63 L17.24 12.45 L15.91 14.75 L14.55 14.03 L13.93 14.65 L14.65 16.01 L12.35 17.34 L11.53 16.03 L10.68 16.26 L10.63 17.80 L7.97 17.80 L7.92 16.26 L7.07 16.03 L6.25 17.34 L3.95 16.01 L4.67 14.65 L4.05 14.03 L2.69 14.75 L1.36 12.45 L2.67 11.63 L2.44 10.78 L0.90 10.73 L0.90 8.07 L2.44 8.02 L2.67 7.17 L1.36 6.35 L2.69 4.05 L4.05 4.77 L4.67 4.15 L3.95 2.79 L6.25 1.46 L7.07 2.77 L7.92 2.54 L7.97 1.00 L10.63 1.00 L10.68 2.54 L11.53 2.77 L12.35 1.46 L14.65 2.79 L13.93 4.15 L14.55 4.77 L15.91 4.05 L17.24 6.35 L15.93 7.17 Z M6.30 9.40 a3.00 3.00 0 1 0 6.00 0 a3.00 3.00 0 1 0 -6.00 0 Z" fill="url(#gg)" fill-rule="evenodd" stroke="#7797b4" stroke-width="1"/><circle cx="9.3" cy="9.4" r="3.9" fill="none" stroke="#6283a3" stroke-width="1.5"/><path d="M20.09 16.22 L21.30 16.42 L20.97 18.06 L19.78 17.77 L19.32 18.46 L20.03 19.45 L18.63 20.38 L17.99 19.34 L17.18 19.49 L16.98 20.70 L15.34 20.37 L15.63 19.18 L14.94 18.72 L13.95 19.43 L13.02 18.03 L14.06 17.39 L13.91 16.58 L12.70 16.38 L13.03 14.74 L14.22 15.03 L14.68 14.34 L13.97 13.35 L15.37 12.42 L16.01 13.46 L16.82 13.31 L17.02 12.10 L18.66 12.43 L18.37 13.62 L19.06 14.08 L20.05 13.37 L20.98 14.77 L19.94 15.41 Z M15.80 16.40 a1.20 1.20 0 1 0 2.40 0 a1.20 1.20 0 1 0 -2.40 0 Z" fill="url(#gg)" fill-rule="evenodd" stroke="#7595b3" stroke-width="0.9"/></svg>
<svg style="left:430px;top:479.05px" width="22" height="22" viewBox="0 0 22 22"><path d="M16.16 8.02 L17.70 8.07 L17.70 10.73 L16.16 10.78 L15.93 11.63 L17.24 12.45 L15.91 14.75 L14.55 14.03 L13.93 14.65 L14.65 16.01 L12.35 17.34 L11.53 16.03 L10.68 16.26 L10.63 17.80 L7.97 17.80 L7.92 16.26 L7.07 16.03 L6.25 17.34 L3.95 16.01 L4.67 14.65 L4.05 14.03 L2.69 14.75 L1.36 12.45 L2.67 11.63 L2.44 10.78 L0.90 10.73 L0.90 8.07 L2.44 8.02 L2.67 7.17 L1.36 6.35 L2.69 4.05 L4.05 4.77 L4.67 4.15 L3.95 2.79 L6.25 1.46 L7.07 2.77 L7.92 2.54 L7.97 1.00 L10.63 1.00 L10.68 2.54 L11.53 2.77 L12.35 1.46 L14.65 2.79 L13.93 4.15 L14.55 4.77 L15.91 4.05 L17.24 6.35 L15.93 7.17 Z M6.30 9.40 a3.00 3.00 0 1 0 6.00 0 a3.00 3.00 0 1 0 -6.00 0 Z" fill="url(#gg)" fill-rule="evenodd" stroke="#7797b4" stroke-width="1"/><circle cx="9.3" cy="9.4" r="3.9" fill="none" stroke="#6283a3" stroke-width="1.5"/><path d="M20.09 16.22 L21.30 16.42 L20.97 18.06 L19.78 17.77 L19.32 18.46 L20.03 19.45 L18.63 20.38 L17.99 19.34 L17.18 19.49 L16.98 20.70 L15.34 20.37 L15.63 19.18 L14.94 18.72 L13.95 19.43 L13.02 18.03 L14.06 17.39 L13.91 16.58 L12.70 16.38 L13.03 14.74 L14.22 15.03 L14.68 14.34 L13.97 13.35 L15.37 12.42 L16.01 13.46 L16.82 13.31 L17.02 12.10 L18.66 12.43 L18.37 13.62 L19.06 14.08 L20.05 13.37 L20.98 14.77 L19.94 15.41 Z M15.80 16.40 a1.20 1.20 0 1 0 2.40 0 a1.20 1.20 0 1 0 -2.40 0 Z" fill="url(#gg)" fill-rule="evenodd" stroke="#7595b3" stroke-width="0.9"/></svg>
<svg style="left:430px;top:502.8px" width="22" height="22" viewBox="0 0 22 22"><path d="M16.16 8.02 L17.70 8.07 L17.70 10.73 L16.16 10.78 L15.93 11.63 L17.24 12.45 L15.91 14.75 L14.55 14.03 L13.93 14.65 L14.65 16.01 L12.35 17.34 L11.53 16.03 L10.68 16.26 L10.63 17.80 L7.97 17.80 L7.92 16.26 L7.07 16.03 L6.25 17.34 L3.95 16.01 L4.67 14.65 L4.05 14.03 L2.69 14.75 L1.36 12.45 L2.67 11.63 L2.44 10.78 L0.90 10.73 L0.90 8.07 L2.44 8.02 L2.67 7.17 L1.36 6.35 L2.69 4.05 L4.05 4.77 L4.67 4.15 L3.95 2.79 L6.25 1.46 L7.07 2.77 L7.92 2.54 L7.97 1.00 L10.63 1.00 L10.68 2.54 L11.53 2.77 L12.35 1.46 L14.65 2.79 L13.93 4.15 L14.55 4.77 L15.91 4.05 L17.24 6.35 L15.93 7.17 Z M6.30 9.40 a3.00 3.00 0 1 0 6.00 0 a3.00 3.00 0 1 0 -6.00 0 Z" fill="url(#gs)" fill-rule="evenodd" stroke="#3d7fc0" stroke-width="0.7"/><circle cx="9.3" cy="9.4" r="3.9" fill="none" stroke="#2e6bb0" stroke-width="1.3"/><path d="M20.09 16.22 L21.30 16.42 L20.97 18.06 L19.78 17.77 L19.32 18.46 L20.03 19.45 L18.63 20.38 L17.99 19.34 L17.18 19.49 L16.98 20.70 L15.34 20.37 L15.63 19.18 L14.94 18.72 L13.95 19.43 L13.02 18.03 L14.06 17.39 L13.91 16.58 L12.70 16.38 L13.03 14.74 L14.22 15.03 L14.68 14.34 L13.97 13.35 L15.37 12.42 L16.01 13.46 L16.82 13.31 L17.02 12.10 L18.66 12.43 L18.37 13.62 L19.06 14.08 L20.05 13.37 L20.98 14.77 L19.94 15.41 Z M15.80 16.40 a1.20 1.20 0 1 0 2.40 0 a1.20 1.20 0 1 0 -2.40 0 Z" fill="url(#gs)" fill-rule="evenodd" stroke="#3d7fc0" stroke-width="0.6"/></svg>
<svg style="left:430px;top:526.55px" width="22" height="22" viewBox="0 0 22 22"><path d="M16.16 8.02 L17.70 8.07 L17.70 10.73 L16.16 10.78 L15.93 11.63 L17.24 12.45 L15.91 14.75 L14.55 14.03 L13.93 14.65 L14.65 16.01 L12.35 17.34 L11.53 16.03 L10.68 16.26 L10.63 17.80 L7.97 17.80 L7.92 16.26 L7.07 16.03 L6.25 17.34 L3.95 16.01 L4.67 14.65 L4.05 14.03 L2.69 14.75 L1.36 12.45 L2.67 11.63 L2.44 10.78 L0.90 10.73 L0.90 8.07 L2.44 8.02 L2.67 7.17 L1.36 6.35 L2.69 4.05 L4.05 4.77 L4.67 4.15 L3.95 2.79 L6.25 1.46 L7.07 2.77 L7.92 2.54 L7.97 1.00 L10.63 1.00 L10.68 2.54 L11.53 2.77 L12.35 1.46 L14.65 2.79 L13.93 4.15 L14.55 4.77 L15.91 4.05 L17.24 6.35 L15.93 7.17 Z M6.30 9.40 a3.00 3.00 0 1 0 6.00 0 a3.00 3.00 0 1 0 -6.00 0 Z" fill="url(#gg)" fill-rule="evenodd" stroke="#7797b4" stroke-width="1"/><circle cx="9.3" cy="9.4" r="3.9" fill="none" stroke="#6283a3" stroke-width="1.5"/><path d="M20.09 16.22 L21.30 16.42 L20.97 18.06 L19.78 17.77 L19.32 18.46 L20.03 19.45 L18.63 20.38 L17.99 19.34 L17.18 19.49 L16.98 20.70 L15.34 20.37 L15.63 19.18 L14.94 18.72 L13.95 19.43 L13.02 18.03 L14.06 17.39 L13.91 16.58 L12.70 16.38 L13.03 14.74 L14.22 15.03 L14.68 14.34 L13.97 13.35 L15.37 12.42 L16.01 13.46 L16.82 13.31 L17.02 12.10 L18.66 12.43 L18.37 13.62 L19.06 14.08 L20.05 13.37 L20.98 14.77 L19.94 15.41 Z M15.80 16.40 a1.20 1.20 0 1 0 2.40 0 a1.20 1.20 0 1 0 -2.40 0 Z" fill="url(#gg)" fill-rule="evenodd" stroke="#7595b3" stroke-width="0.9"/></svg>
<svg style="left:430px;top:550.3px" width="22" height="22" viewBox="0 0 22 22"><path d="M16.16 8.02 L17.70 8.07 L17.70 10.73 L16.16 10.78 L15.93 11.63 L17.24 12.45 L15.91 14.75 L14.55 14.03 L13.93 14.65 L14.65 16.01 L12.35 17.34 L11.53 16.03 L10.68 16.26 L10.63 17.80 L7.97 17.80 L7.92 16.26 L7.07 16.03 L6.25 17.34 L3.95 16.01 L4.67 14.65 L4.05 14.03 L2.69 14.75 L1.36 12.45 L2.67 11.63 L2.44 10.78 L0.90 10.73 L0.90 8.07 L2.44 8.02 L2.67 7.17 L1.36 6.35 L2.69 4.05 L4.05 4.77 L4.67 4.15 L3.95 2.79 L6.25 1.46 L7.07 2.77 L7.92 2.54 L7.97 1.00 L10.63 1.00 L10.68 2.54 L11.53 2.77 L12.35 1.46 L14.65 2.79 L13.93 4.15 L14.55 4.77 L15.91 4.05 L17.24 6.35 L15.93 7.17 Z M6.30 9.40 a3.00 3.00 0 1 0 6.00 0 a3.00 3.00 0 1 0 -6.00 0 Z" fill="url(#gg)" fill-rule="evenodd" stroke="#7797b4" stroke-width="1"/><circle cx="9.3" cy="9.4" r="3.9" fill="none" stroke="#6283a3" stroke-width="1.5"/><path d="M20.09 16.22 L21.30 16.42 L20.97 18.06 L19.78 17.77 L19.32 18.46 L20.03 19.45 L18.63 20.38 L17.99 19.34 L17.18 19.49 L16.98 20.70 L15.34 20.37 L15.63 19.18 L14.94 18.72 L13.95 19.43 L13.02 18.03 L14.06 17.39 L13.91 16.58 L12.70 16.38 L13.03 14.74 L14.22 15.03 L14.68 14.34 L13.97 13.35 L15.37 12.42 L16.01 13.46 L16.82 13.31 L17.02 12.10 L18.66 12.43 L18.37 13.62 L19.06 14.08 L20.05 13.37 L20.98 14.77 L19.94 15.41 Z M15.80 16.40 a1.20 1.20 0 1 0 2.40 0 a1.20 1.20 0 1 0 -2.40 0 Z" fill="url(#gg)" fill-rule="evenodd" stroke="#7595b3" stroke-width="0.9"/></svg>
<svg style="left:430px;top:574.05px" width="22" height="22" viewBox="0 0 22 22"><path d="M16.16 8.02 L17.70 8.07 L17.70 10.73 L16.16 10.78 L15.93 11.63 L17.24 12.45 L15.91 14.75 L14.55 14.03 L13.93 14.65 L14.65 16.01 L12.35 17.34 L11.53 16.03 L10.68 16.26 L10.63 17.80 L7.97 17.80 L7.92 16.26 L7.07 16.03 L6.25 17.34 L3.95 16.01 L4.67 14.65 L4.05 14.03 L2.69 14.75 L1.36 12.45 L2.67 11.63 L2.44 10.78 L0.90 10.73 L0.90 8.07 L2.44 8.02 L2.67 7.17 L1.36 6.35 L2.69 4.05 L4.05 4.77 L4.67 4.15 L3.95 2.79 L6.25 1.46 L7.07 2.77 L7.92 2.54 L7.97 1.00 L10.63 1.00 L10.68 2.54 L11.53 2.77 L12.35 1.46 L14.65 2.79 L13.93 4.15 L14.55 4.77 L15.91 4.05 L17.24 6.35 L15.93 7.17 Z M6.30 9.40 a3.00 3.00 0 1 0 6.00 0 a3.00 3.00 0 1 0 -6.00 0 Z" fill="url(#gg)" fill-rule="evenodd" stroke="#7797b4" stroke-width="1"/><circle cx="9.3" cy="9.4" r="3.9" fill="none" stroke="#6283a3" stroke-width="1.5"/><path d="M20.09 16.22 L21.30 16.42 L20.97 18.06 L19.78 17.77 L19.32 18.46 L20.03 19.45 L18.63 20.38 L17.99 19.34 L17.18 19.49 L16.98 20.70 L15.34 20.37 L15.63 19.18 L14.94 18.72 L13.95 19.43 L13.02 18.03 L14.06 17.39 L13.91 16.58 L12.70 16.38 L13.03 14.74 L14.22 15.03 L14.68 14.34 L13.97 13.35 L15.37 12.42 L16.01 13.46 L16.82 13.31 L17.02 12.10 L18.66 12.43 L18.37 13.62 L19.06 14.08 L20.05 13.37 L20.98 14.77 L19.94 15.41 Z M15.80 16.40 a1.20 1.20 0 1 0 2.40 0 a1.20 1.20 0 1 0 -2.40 0 Z" fill="url(#gg)" fill-rule="evenodd" stroke="#7595b3" stroke-width="0.9"/></svg>
<svg style="left:430px;top:597.8px" width="22" height="22" viewBox="0 0 22 22"><path d="M16.16 8.02 L17.70 8.07 L17.70 10.73 L16.16 10.78 L15.93 11.63 L17.24 12.45 L15.91 14.75 L14.55 14.03 L13.93 14.65 L14.65 16.01 L12.35 17.34 L11.53 16.03 L10.68 16.26 L10.63 17.80 L7.97 17.80 L7.92 16.26 L7.07 16.03 L6.25 17.34 L3.95 16.01 L4.67 14.65 L4.05 14.03 L2.69 14.75 L1.36 12.45 L2.67 11.63 L2.44 10.78 L0.90 10.73 L0.90 8.07 L2.44 8.02 L2.67 7.17 L1.36 6.35 L2.69 4.05 L4.05 4.77 L4.67 4.15 L3.95 2.79 L6.25 1.46 L7.07 2.77 L7.92 2.54 L7.97 1.00 L10.63 1.00 L10.68 2.54 L11.53 2.77 L12.35 1.46 L14.65 2.79 L13.93 4.15 L14.55 4.77 L15.91 4.05 L17.24 6.35 L15.93 7.17 Z M6.30 9.40 a3.00 3.00 0 1 0 6.00 0 a3.00 3.00 0 1 0 -6.00 0 Z" fill="url(#gg)" fill-rule="evenodd" stroke="#7797b4" stroke-width="1"/><circle cx="9.3" cy="9.4" r="3.9" fill="none" stroke="#6283a3" stroke-width="1.5"/><path d="M20.09 16.22 L21.30 16.42 L20.97 18.06 L19.78 17.77 L19.32 18.46 L20.03 19.45 L18.63 20.38 L17.99 19.34 L17.18 19.49 L16.98 20.70 L15.34 20.37 L15.63 19.18 L14.94 18.72 L13.95 19.43 L13.02 18.03 L14.06 17.39 L13.91 16.58 L12.70 16.38 L13.03 14.74 L14.22 15.03 L14.68 14.34 L13.97 13.35 L15.37 12.42 L16.01 13.46 L16.82 13.31 L17.02 12.10 L18.66 12.43 L18.37 13.62 L19.06 14.08 L20.05 13.37 L20.98 14.77 L19.94 15.41 Z M15.80 16.40 a1.20 1.20 0 1 0 2.40 0 a1.20 1.20 0 1 0 -2.40 0 Z" fill="url(#gg)" fill-rule="evenodd" stroke="#7595b3" stroke-width="0.9"/></svg>
<svg style="left:430px;top:621.55px" width="22" height="22" viewBox="0 0 22 22"><path d="M16.16 8.02 L17.70 8.07 L17.70 10.73 L16.16 10.78 L15.93 11.63 L17.24 12.45 L15.91 14.75 L14.55 14.03 L13.93 14.65 L14.65 16.01 L12.35 17.34 L11.53 16.03 L10.68 16.26 L10.63 17.80 L7.97 17.80 L7.92 16.26 L7.07 16.03 L6.25 17.34 L3.95 16.01 L4.67 14.65 L4.05 14.03 L2.69 14.75 L1.36 12.45 L2.67 11.63 L2.44 10.78 L0.90 10.73 L0.90 8.07 L2.44 8.02 L2.67 7.17 L1.36 6.35 L2.69 4.05 L4.05 4.77 L4.67 4.15 L3.95 2.79 L6.25 1.46 L7.07 2.77 L7.92 2.54 L7.97 1.00 L10.63 1.00 L10.68 2.54 L11.53 2.77 L12.35 1.46 L14.65 2.79 L13.93 4.15 L14.55 4.77 L15.91 4.05 L17.24 6.35 L15.93 7.17 Z M6.30 9.40 a3.00 3.00 0 1 0 6.00 0 a3.00 3.00 0 1 0 -6.00 0 Z" fill="url(#gg)" fill-rule="evenodd" stroke="#7797b4" stroke-width="1"/><circle cx="9.3" cy="9.4" r="3.9" fill="none" stroke="#6283a3" stroke-width="1.5"/><path d="M20.09 16.22 L21.30 16.42 L20.97 18.06 L19.78 17.77 L19.32 18.46 L20.03 19.45 L18.63 20.38 L17.99 19.34 L17.18 19.49 L16.98 20.70 L15.34 20.37 L15.63 19.18 L14.94 18.72 L13.95 19.43 L13.02 18.03 L14.06 17.39 L13.91 16.58 L12.70 16.38 L13.03 14.74 L14.22 15.03 L14.68 14.34 L13.97 13.35 L15.37 12.42 L16.01 13.46 L16.82 13.31 L17.02 12.10 L18.66 12.43 L18.37 13.62 L19.06 14.08 L20.05 13.37 L20.98 14.77 L19.94 15.41 Z M15.80 16.40 a1.20 1.20 0 1 0 2.40 0 a1.20 1.20 0 1 0 -2.40 0 Z" fill="url(#gg)" fill-rule="evenodd" stroke="#7595b3" stroke-width="0.9"/></svg>
<svg style="left:430px;top:645.3px" width="22" height="22" viewBox="0 0 22 22"><path d="M16.16 8.02 L17.70 8.07 L17.70 10.73 L16.16 10.78 L15.93 11.63 L17.24 12.45 L15.91 14.75 L14.55 14.03 L13.93 14.65 L14.65 16.01 L12.35 17.34 L11.53 16.03 L10.68 16.26 L10.63 17.80 L7.97 17.80 L7.92 16.26 L7.07 16.03 L6.25 17.34 L3.95 16.01 L4.67 14.65 L4.05 14.03 L2.69 14.75 L1.36 12.45 L2.67 11.63 L2.44 10.78 L0.90 10.73 L0.90 8.07 L2.44 8.02 L2.67 7.17 L1.36 6.35 L2.69 4.05 L4.05 4.77 L4.67 4.15 L3.95 2.79 L6.25 1.46 L7.07 2.77 L7.92 2.54 L7.97 1.00 L10.63 1.00 L10.68 2.54 L11.53 2.77 L12.35 1.46 L14.65 2.79 L13.93 4.15 L14.55 4.77 L15.91 4.05 L17.24 6.35 L15.93 7.17 Z M6.30 9.40 a3.00 3.00 0 1 0 6.00 0 a3.00 3.00 0 1 0 -6.00 0 Z" fill="url(#gg)" fill-rule="evenodd" stroke="#7797b4" stroke-width="1"/><circle cx="9.3" cy="9.4" r="3.9" fill="none" stroke="#6283a3" stroke-width="1.5"/><path d="M20.09 16.22 L21.30 16.42 L20.97 18.06 L19.78 17.77 L19.32 18.46 L20.03 19.45 L18.63 20.38 L17.99 19.34 L17.18 19.49 L16.98 20.70 L15.34 20.37 L15.63 19.18 L14.94 18.72 L13.95 19.43 L13.02 18.03 L14.06 17.39 L13.91 16.58 L12.70 16.38 L13.03 14.74 L14.22 15.03 L14.68 14.34 L13.97 13.35 L15.37 12.42 L16.01 13.46 L16.82 13.31 L17.02 12.10 L18.66 12.43 L18.37 13.62 L19.06 14.08 L20.05 13.37 L20.98 14.77 L19.94 15.41 Z M15.80 16.40 a1.20 1.20 0 1 0 2.40 0 a1.20 1.20 0 1 0 -2.40 0 Z" fill="url(#gg)" fill-rule="evenodd" stroke="#7595b3" stroke-width="0.9"/></svg>
<svg style="left:170px;top:110px" width="26" height="28" viewBox="170 110 26 28"><circle cx="181.3" cy="123" r="6.9" fill="none" stroke="#839fbd" stroke-width="1.3" stroke-dasharray="1.8 1.8" opacity="0.8"/><circle cx="181.3" cy="123" r="4.9" fill="none" stroke="#cfe5f6" stroke-width="2.4"/><circle cx="189.3" cy="130.6" r="3.7" fill="none" stroke="#869fbc" stroke-width="1" stroke-dasharray="1.3 1.3" opacity="0.8"/><circle cx="189.3" cy="130.6" r="2.3" fill="none" stroke="#bed6ea" stroke-width="1.4"/></svg>
<div class="a" style="left:962.9px;top:140px;width:21.1px;height:526px;overflow:hidden"><span class="t" style="left:0;top:6px">Log On As</span><span class="t" style="left:0;top:31.8px;color:#000">Local Syste...</span><span class="t" style="left:0;top:55.55px;color:#000">Local Syste...</span><span class="t" style="left:0;top:79.3px;color:#000">Local Syste...</span><span class="t" style="left:0;top:103.05px;color:#000">Local Syste...</span><span class="t" style="left:0;top:126.8px;color:#000">Local Syste...</span><span class="t" style="left:0;top:150.55px;color:#000">Local Syste...</span><span class="t" style="left:0;top:174.3px;color:#000">Local Syste...</span><span class="t" style="left:0;top:198.05px;color:#000">Local Syste...</span><span class="t" style="left:0;top:221.8px;color:#000">Local Syste...</span><span class="t" style="left:0;top:245.55px;color:#000">Local Syste...</span><span class="t" style="left:0;top:269.3px;color:#000">Local Syste...</span><span class="t" style="left:0;top:293.05px;color:#000">Local Syste...</span><span class="t" style="left:0;top:316.8px;color:#000">Local Syste...</span><span class="t" style="left:0;top:340.55px;color:#000">Local Syste...</span><span class="t" style="left:0;top:364.3px;color:#fff">Local Syste...</span><span class="t" style="left:0;top:388.05px;color:#000">Local Syste...</span><span class="t" style="left:0;top:411.8px;color:#000">Local Syste...</span><span class="t" style="left:0;top:435.55px;color:#000">Local Syste...</span><span class="t" style="left:0;top:459.3px;color:#000">Local Syste...</span><span class="t" style="left:0;top:483.05px;color:#000">Local Syste...</span><span class="t" style="left:0;top:506.8px;color:#000">Local Syste...</span></div>
<span class="t" style="left:36.7px;top:12px;letter-spacing:-0.276px;">Services</span>
<span class="t" style="left:14.4px;top:46px;letter-spacing:-0.119px;">File</span>
<span class="t" style="left:56.7px;top:46px;letter-spacing:0.131px;">Action</span>
<span class="t" style="left:117.8px;top:46px;letter-spacing:0.007px;">View</span>
<span class="t" style="left:168px;top:46px;letter-spacing:0.118px;">Help</span>
<span class="t" style="left:34.2px;top:110.5px;letter-spacing:-0.428px;">Services (Local)</span>
<span class="t" style="left:204px;top:115px;letter-spacing:-0.178px;">Services (Local)</span>
<span class="t" style="left:167px;top:146px;font-weight:bold;">Print Spooler</span>
<span class="t" style="left:166.5px;top:187px;letter-spacing:0.164px;color:#1560bd;text-decoration:underline;">Stop</span>
<span class="t" style="left:200.2px;top:187px;letter-spacing:0.043px;">the service</span>
<span class="t" style="left:166.5px;top:205.7px;letter-spacing:-0.136px;color:#1560bd;text-decoration:underline;">Restart</span>
<span class="t" style="left:215.5px;top:205.7px;letter-spacing:0.007px;">the service</span>
<span class="t" style="left:167.1px;top:262px;letter-spacing:0.136px;">Description:</span>
<span class="t" style="left:167.1px;top:280.8px;letter-spacing:0.044px;">This service spools print jobs and</span>
<span class="t" style="left:167.1px;top:299.5px;letter-spacing:0.284px;">handles interaction with the printer.</span>
<span class="t" style="left:167.1px;top:318.3px;letter-spacing:0.279px;">If you turn off this service, you won’t</span>
<span class="t" style="left:167.1px;top:337px;letter-spacing:0.129px;">be able to print or see your printers.</span>
<span class="t" style="left:170.6px;top:691.3px;letter-spacing:-0.223px;">Extended</span>
<span class="t" style="left:246.5px;top:691.3px;letter-spacing:-0.007px;">Standard</span>
<span class="t" style="left:433px;top:146px;letter-spacing:0.153px;">Name</span>
<span class="t" style="left:657.5px;top:146px;letter-spacing:0.170px;">Description</span>
<span class="t" style="left:765.3px;top:146px;letter-spacing:-0.202px;">Status</span>
<span class="t" style="left:846.6px;top:146px;letter-spacing:-0.046px;">Startup Type</span>
<span class="t" style="left:453.2px;top:171.8px;letter-spacing:-0.098px;">PaperCut Mobility Print Serv...</span>
<span class="t" style="left:657.5px;top:171.8px;letter-spacing:-0.463px;">BYOD and m...</span>
<span class="t" style="left:765.3px;top:171.8px;letter-spacing:0.326px;">Running</span>
<span class="t" style="left:846.6px;top:171.8px;letter-spacing:0.246px;">Automatic</span>
<span class="t" style="left:453.2px;top:195.55px;letter-spacing:-0.055px;">Parental Controls</span>
<span class="t" style="left:657.5px;top:195.55px;letter-spacing:-0.300px;">Enforces par...</span>
<span class="t" style="left:846.6px;top:195.55px;letter-spacing:0.406px;">Manual</span>
<span class="t" style="left:453.2px;top:219.3px;letter-spacing:-0.399px;">Payments and NFC/SE Mana...</span>
<span class="t" style="left:657.5px;top:219.3px;letter-spacing:-0.224px;">Manages pa...</span>
<span class="t" style="left:846.6px;top:219.3px;letter-spacing:-0.175px;">Manual (Trigg...</span>
<span class="t" style="left:453.2px;top:243.05px;letter-spacing:-0.219px;">Peer Name Resolution Proto...</span>
<span class="t" style="left:657.5px;top:243.05px;letter-spacing:-0.390px;">Enables serv...</span>
<span class="t" style="left:846.6px;top:243.05px;letter-spacing:0.406px;">Manual</span>
<span class="t" style="left:453.2px;top:266.8px;letter-spacing:0.093px;">Peer Networking Grouping</span>
<span class="t" style="left:657.5px;top:266.8px;letter-spacing:-0.328px;">Enables mul...</span>
<span class="t" style="left:846.6px;top:266.8px;letter-spacing:0.406px;">Manual</span>
<span class="t" style="left:453.2px;top:290.55px;letter-spacing:0.018px;">Peer Networking Identity M...</span>
<span class="t" style="left:657.5px;top:290.55px;letter-spacing:-0.239px;">Provides ide...</span>
<span class="t" style="left:846.6px;top:290.55px;letter-spacing:0.406px;">Manual</span>
<span class="t" style="left:453.2px;top:314.3px;letter-spacing:-0.357px;">Performance Counter DLL H...</span>
<span class="t" style="left:657.5px;top:314.3px;letter-spacing:-0.443px;">Enables rem...</span>
<span class="t" style="left:846.6px;top:314.3px;letter-spacing:0.406px;">Manual</span>
<span class="t" style="left:453.2px;top:338.05px;letter-spacing:-0.107px;">Performance Logs &amp; Alerts</span>
<span class="t" style="left:657.5px;top:338.05px;letter-spacing:-0.357px;">Performance...</span>
<span class="t" style="left:846.6px;top:338.05px;letter-spacing:0.406px;">Manual</span>
<span class="t" style="left:453.2px;top:361.8px;letter-spacing:-0.324px;">Phone Service</span>
<span class="t" style="left:657.5px;top:361.8px;letter-spacing:-0.097px;">Manages th...</span>
<span class="t" style="left:765.3px;top:361.8px;letter-spacing:0.326px;">Running</span>
<span class="t" style="left:846.6px;top:361.8px;letter-spacing:-0.175px;">Manual (Trigg...</span>
<span class="t" style="left:453.2px;top:385.55px;letter-spacing:-0.131px;">Plantronics Update Service</span>
<span class="t" style="left:657.5px;top:385.55px;letter-spacing:-0.336px;">Plantronics ...</span>
<span class="t" style="left:765.3px;top:385.55px;letter-spacing:0.326px;">Running</span>
<span class="t" style="left:846.6px;top:385.55px;letter-spacing:0.246px;">Automatic</span>
<span class="t" style="left:453.2px;top:409.3px;letter-spacing:-0.145px;">Plug and Play</span>
<span class="t" style="left:657.5px;top:409.3px;letter-spacing:-0.441px;">Enables a co...</span>
<span class="t" style="left:765.3px;top:409.3px;letter-spacing:0.326px;">Running</span>
<span class="t" style="left:846.6px;top:409.3px;letter-spacing:0.406px;">Manual</span>
<span class="t" style="left:453.2px;top:433.05px;letter-spacing:-0.344px;">PNRP Machine Name Public...</span>
<span class="t" style="left:657.5px;top:433.05px;letter-spacing:-0.467px;">This service ...</span>
<span class="t" style="left:846.6px;top:433.05px;letter-spacing:0.406px;">Manual</span>
<span class="t" style="left:453.2px;top:456.8px;letter-spacing:-0.222px;">Portable Device Enumerator ...</span>
<span class="t" style="left:657.5px;top:456.8px;letter-spacing:-0.260px;">Enforces gro...</span>
<span class="t" style="left:846.6px;top:456.8px;letter-spacing:-0.175px;">Manual (Trigg...</span>
<span class="t" style="left:453.2px;top:480.55px;letter-spacing:-0.502px;">Power</span>
<span class="t" style="left:657.5px;top:480.55px;letter-spacing:-0.116px;">Manages po...</span>
<span class="t" style="left:765.3px;top:480.55px;letter-spacing:0.326px;">Running</span>
<span class="t" style="left:846.6px;top:480.55px;letter-spacing:0.246px;">Automatic</span>
<span class="t" style="left:453.2px;top:504.3px;color:#fff;">Print Spooler</span>
<span class="t" style="left:657.5px;top:504.3px;letter-spacing:-0.467px;color:#fff;">This service ...</span>
<span class="t" style="left:765.3px;top:504.3px;letter-spacing:0.326px;color:#fff;">Running</span>
<span class="t" style="left:846.6px;top:504.3px;letter-spacing:0.246px;color:#fff;">Automatic</span>
<span class="t" style="left:453.2px;top:528.05px;letter-spacing:-0.080px;">Printer Extensions and Notifi...</span>
<span class="t" style="left:657.5px;top:528.05px;letter-spacing:-0.467px;">This service ...</span>
<span class="t" style="left:846.6px;top:528.05px;letter-spacing:0.406px;">Manual</span>
<span class="t" style="left:453.2px;top:551.8px;letter-spacing:-0.102px;">PrintWorkflow_3c54d3a7</span>
<span class="t" style="left:657.5px;top:551.8px;letter-spacing:-0.321px;">Provides sup...</span>
<span class="t" style="left:846.6px;top:551.8px;letter-spacing:-0.175px;">Manual (Trigg...</span>
<span class="t" style="left:453.2px;top:575.55px;letter-spacing:-0.232px;">Problem Reports Control Pa...</span>
<span class="t" style="left:657.5px;top:575.55px;letter-spacing:-0.467px;">This service ...</span>
<span class="t" style="left:846.6px;top:575.55px;letter-spacing:0.406px;">Manual</span>
<span class="t" style="left:453.2px;top:599.3px;letter-spacing:-0.123px;">Program Compatibility Assis...</span>
<span class="t" style="left:657.5px;top:599.3px;letter-spacing:-0.467px;">This service ...</span>
<span class="t" style="left:765.3px;top:599.3px;letter-spacing:0.326px;">Running</span>
<span class="t" style="left:846.6px;top:599.3px;letter-spacing:0.406px;">Manual</span>
<span class="t" style="left:453.2px;top:623.05px;letter-spacing:0.057px;">Quality Windows Audio Vid...</span>
<span class="t" style="left:657.5px;top:623.05px;letter-spacing:0.013px;">Quality Win...</span>
<span class="t" style="left:765.3px;top:623.05px;letter-spacing:0.326px;">Running</span>
<span class="t" style="left:846.6px;top:623.05px;letter-spacing:0.406px;">Manual</span>
<span class="t" style="left:453.2px;top:646.8px;letter-spacing:-0.060px;">Radio Management Service</span>
<span class="t" style="left:657.5px;top:646.8px;letter-spacing:-0.160px;">Radio Mana...</span>
<span class="t" style="left:765.3px;top:646.8px;letter-spacing:0.326px;">Running</span>
<span class="t" style="left:846.6px;top:646.8px;letter-spacing:0.406px;">Manual</span>
<svg style="left:0;top:68px" width="400" height="32" viewBox="0 68 400 32"><defs><linearGradient id="ar" x1="0" y1="0" x2="0" y2="1"><stop offset="0" stop-color="#b9b9b9"/><stop offset="0.5" stop-color="#8a8a8a"/><stop offset="1" stop-color="#a6a6a6"/></linearGradient><linearGradient id="hb" x1="0" y1="0" x2="1" y2="1"><stop offset="0" stop-color="#4464c8"/><stop offset="1" stop-color="#6a8ae2"/></linearGradient><linearGradient id="tb" x1="0" y1="0" x2="0" y2="1"><stop offset="0" stop-color="#8d9298"/><stop offset="1" stop-color="#b7bbc0"/></linearGradient><linearGradient id="gr" x1="0" y1="0" x2="0" y2="1"><stop offset="0" stop-color="#7fd858"/><stop offset="1" stop-color="#3aa428"/></linearGradient></defs><path d="M8.2 85.1 L17.6 76 L17.6 81 L28 81 L28 89.6 L17.6 89.6 L17.6 94.3 Z" fill="url(#ar)" stroke="#7b7b7b" stroke-width="1" stroke-linejoin="round"/><path d="M56.9 85.1 L47.4 76 L47.4 81 L37 81 L37 89.6 L47.4 89.6 L47.4 94.3 Z" fill="url(#ar)" stroke="#7b7b7b" stroke-width="1" stroke-linejoin="round"/><rect x="63" y="72" width="1" height="25" fill="#b4b4b4"/><rect x="102" y="72" width="1" height="25" fill="#b4b4b4"/><rect x="198" y="72" width="1" height="25" fill="#b4b4b4"/><rect x="265.5" y="72" width="1" height="25" fill="#b4b4b4"/><rect x="72.5" y="71.5" width="27.5" height="25.7" fill="#cce4f7" stroke="#b5d6f0" stroke-width="1"/><rect x="77.5" y="78.8" width="19" height="15.6" fill="#fff" stroke="#82878d" stroke-width="1"/><rect x="78" y="79.3" width="18" height="4" fill="url(#tb)"/><rect x="78.8" y="80.6" width="12" height="1" fill="#e8eaec"/><rect x="91.8" y="80.3" width="1.4" height="1.6" fill="#e8eaec"/><rect x="94" y="80.3" width="1.4" height="1.6" fill="#e8eaec"/><rect x="78" y="83.3" width="18" height="1.4" fill="#c9ccd0"/><rect x="78" y="84.7" width="5.2" height="9.2" fill="#e9ebee"/><rect x="83.2" y="84.7" width="1.6" height="9.2" fill="#8d9298"/><rect x="79.2" y="86" width="2.8" height="1.2" fill="#3e62b8"/><rect x="79.2" y="88.6" width="2.8" height="1.2" fill="#3e62b8"/><rect x="79.2" y="91.2" width="2.8" height="1.2" fill="#3e62b8"/><path d="M86.6 89.2 L91.2 85.8 L91.2 92.6 Z" fill="#58b040"/><rect x="115.3" y="75.6" width="17.4" height="18.6" rx="2.2" fill="#f4f4f4" stroke="#8a8a8a" stroke-width="1.3"/><rect x="117.6" y="80" width="12.6" height="10.6" fill="#fff" stroke="#a9adb3" stroke-width="0.9"/><rect x="117.6" y="80" width="4" height="1.6" fill="#a9adb3"/><rect x="119.2" y="83.6" width="1.4" height="1.3" fill="#5b7fb8"/><rect x="121.6" y="83.6" width="7" height="1.3" fill="#9aa0a8"/><rect x="119.2" y="86.8" width="1.4" height="1.3" fill="#5b7fb8"/><rect x="121.6" y="86.8" width="7" height="1.3" fill="#9aa0a8"/><rect x="121.6" y="91.6" width="4.6" height="2.4" fill="#2fa9b8"/><path d="M146.5 75.6 L157.4 75.6 L161.4 79.8 L161.4 94.2 L146.5 94.2 Z" fill="#fbfbfb" stroke="#9c9c9c" stroke-width="1"/><path d="M157.4 75.6 L157.4 79.8 L161.4 79.8" fill="#e2e2e2" stroke="#aaa" stroke-width="0.8"/><path d="M146.5 94.4 H161.4" stroke="#7c7c7c" stroke-width="1.2"/><path d="M153.2 90.6 A4.6 4.6 0 1 1 158.4 86.4" fill="none" stroke="#45b331" stroke-width="2.9"/><path d="M155.4 86.2 L161.6 86.2 L158.5 91.4 Z" fill="#2f9a22"/><path d="M172.5 75.6 L183.6 75.6 L187.6 79.8 L187.6 94.2 L172.5 94.2 Z" fill="#f8f4e3" stroke="#9c9c9c" stroke-width="1"/><path d="M183.6 75.6 L183.6 79.8 L187.6 79.8" fill="#e4e0d0" stroke="#aaa" stroke-width="0.8"/><path d="M172.5 94.4 H187.6" stroke="#7c7c7c" stroke-width="1.2"/><rect x="175.6" y="82.6" width="1.5" height="1.5" fill="#333"/><rect x="178.4" y="82.8" width="5.6" height="1.1" fill="#777"/><rect x="175.6" y="86.4" width="1.5" height="1.5" fill="#333"/><rect x="178.4" y="86.6" width="5.6" height="1.1" fill="#777"/><rect x="175.6" y="90.2" width="1.5" height="1.5" fill="#333"/><rect x="178.4" y="90.4" width="5.6" height="1.1" fill="#777"/><path d="M181.4 85.6 L187.2 85.6 L187.2 83.2 L192.2 87.4 L187.2 91.6 L187.2 89.2 L181.4 89.2 Z" fill="url(#gr)"/><rect x="212" y="74.9" width="15.8" height="19.5" fill="url(#hb)"/><rect x="212" y="74.9" width="3.6" height="19.5" fill="#2b439f"/><rect x="212" y="74.9" width="15.8" height="19.5" fill="none" stroke="#2b3f96" stroke-width="0.8"/><text x="217.1" y="91.2" font-family="Liberation Sans, sans-serif" font-weight="bold" font-size="16.5" fill="#fff">?</text><rect x="240.2" y="78.8" width="18.6" height="15.6" fill="#fff" stroke="#82878d" stroke-width="1"/><rect x="240.7" y="79.3" width="17.6" height="4" fill="url(#tb)"/><rect x="241.5" y="80.6" width="11.6" height="1" fill="#e8eaec"/><rect x="254.2" y="80.3" width="1.4" height="1.6" fill="#e8eaec"/><rect x="256.4" y="80.3" width="1.4" height="1.6" fill="#e8eaec"/><rect x="240.7" y="83.3" width="17.6" height="1.4" fill="#c9ccd0"/><rect x="252.2" y="84.7" width="6.1" height="9.2" fill="#e9ebee"/><rect x="250.8" y="84.7" width="1.6" height="9.2" fill="#8d9298"/><rect x="254" y="86" width="2.8" height="1.2" fill="#6d7b96"/><rect x="254" y="88.6" width="2.8" height="1.2" fill="#6d7b96"/><rect x="254" y="91.2" width="2.8" height="1.2" fill="#6d7b96"/><path d="M248.4 89.2 L243.8 85.8 L243.8 92.6 Z" fill="#58b040"/><path d="M285.9 78.6 L293.6 84.6 L285.9 90.6 Z" fill="#c4c4c4" stroke="#909090" stroke-width="1" stroke-linejoin="round"/><rect x="310.6" y="78.3" width="12.6" height="12.5" rx="2" fill="#474747"/><rect x="340.7" y="78.3" width="3.9" height="12.5" rx="0.8" fill="#7c7c7c"/><rect x="347.2" y="78.3" width="3.9" height="12.5" rx="0.8" fill="#7c7c7c"/><rect x="368" y="78.3" width="3.9" height="12.5" rx="0.8" fill="#505050"/><path d="M374 78.4 L382.3 84.6 L374 90.8 Z" fill="#45c02f" stroke="#3aa428" stroke-width="0.6" stroke-linejoin="round"/></svg>
<svg style="left:420px;top:490px" width="570" height="45" viewBox="420 490 570 45"><rect x="426.3" y="498.3" width="552" height="27.9" fill="none" stroke="#e31e26" stroke-width="4.6"/></svg>
</body></html>
